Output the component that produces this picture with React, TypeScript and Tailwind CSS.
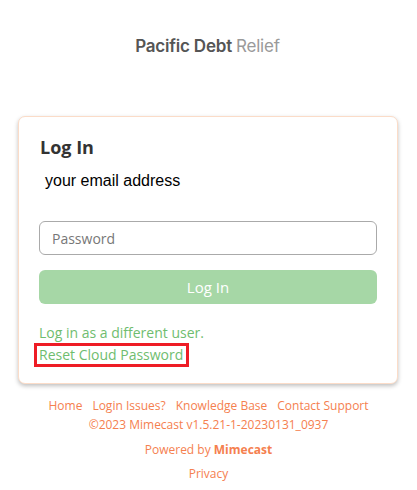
import React from "react";

export default function App() {
  return (
    <div className="w-[417px] h-[490px] bg-white overflow-hidden" style={{ fontFamily: '"Open Sans", sans-serif' }}>
      <div className="pt-[36px] h-[116px] flex justify-center">
        <div className="text-[17px] leading-[20px] tracking-[-0.2px] -ml-[2px]" style={{ fontFamily: 'Inter, sans-serif' }}>
          <span className="font-semibold text-[#555555]">Pacific Debt</span>
          <span className="text-[#9a9a9a] ml-[4px]">Relief</span>
        </div>
      </div>
      <div className="mx-[18px] w-[380px] h-[268px] rounded-[7px] border border-[#fbdcc8] bg-white shadow-[0_2px_4px_rgba(0,0,0,0.25)] px-[20px] pt-[18px]">
        <h1 className="text-[18px] leading-[24px] font-bold text-[#333333] ml-[1px]">Log In</h1>
        <div className="mt-[12px] ml-[6px] text-[16px] leading-[20px] text-black" style={{ fontFamily: '"Liberation Sans", Arial, sans-serif' }}>
          your email address
        </div>
        <div className="mt-[30px] h-[34px] w-[338px] rounded-[6px] border border-[#aaaaaa] flex items-center px-[12px] text-[14px] text-[#777777]">
          Password
        </div>
        <div className="mt-[15px] h-[34px] w-[338px] rounded-[6px] bg-[#a6d7a6] flex items-center justify-center text-[15px] text-white">
          Log In
        </div>
        <div className="mt-[19px] text-[14px] leading-[20px] text-[#6fbd6f]">Log in as a different user.</div>
        <div className="-ml-[5px] block border-[3px] border-[#ee1c25] px-[2px] h-[24px] w-[155px]">
          <span className="text-[14px] leading-[18px] text-[#6fbd6f] block">Reset Cloud Password</span>
        </div>
      </div>
      <div className="mt-[12px] flex flex-col items-center text-[12px] text-[#f5804f]">
        <div className="flex gap-[10px] leading-[19px]">
          <span>Home</span>
          <span>Login Issues?</span>
          <span>Knowledge Base</span>
          <span>Contact Support</span>
        </div>
        <div className="leading-[19px]">©2023 Mimecast v1.5.21-1-20230131_0937</div>
        <div className="mt-[6px] leading-[19px]">
          Powered by <span className="font-bold">Mimecast</span>
        </div>
        <div className="mt-[5px] leading-[19px]">Privacy</div>
      </div>
    </div>
  );
}
